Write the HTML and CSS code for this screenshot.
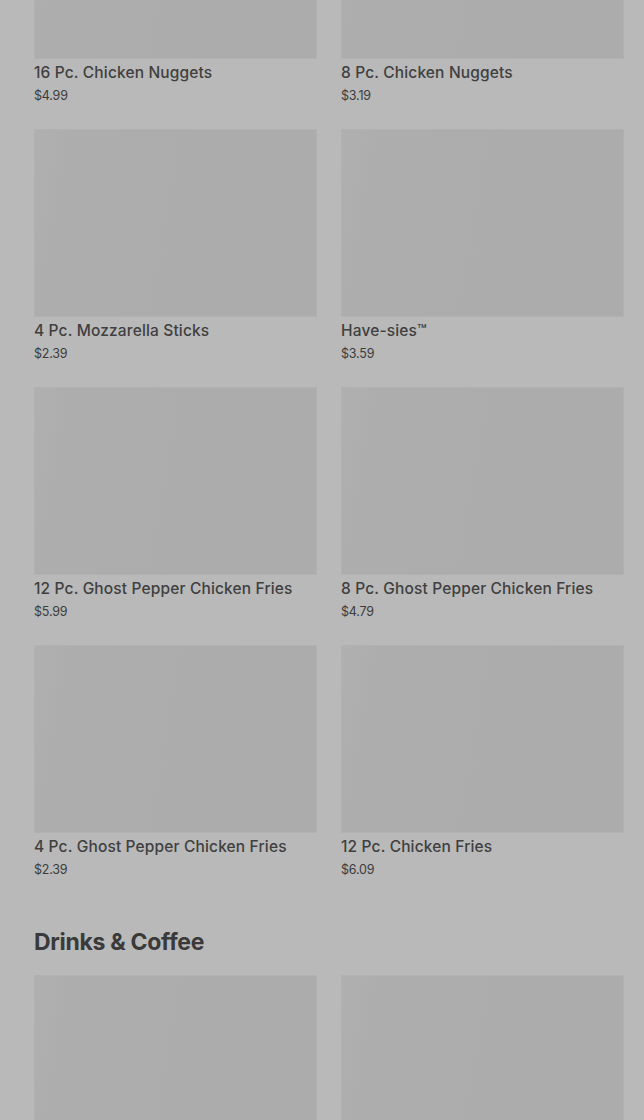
FILE: index.html
```html
<!DOCTYPE html>
<html lang="en">
<head>
  <meta charset="UTF-8" />
  <meta name="viewport" content="width=device-width, initial-scale=1.0"/>
  <title>Menu</title>
  <link rel="stylesheet" href="styles.css">
</head>
<body>
  <div class="menu">
    <section class="category">
      <div class="grid">
        <div class="item">
          <div class="thumb"></div>
          <div class="name">16 Pc. Chicken Nuggets</div>
          <div class="price">$4.99</div>
        </div>
        <div class="item">
          <div class="thumb"></div>
          <div class="name">8 Pc. Chicken Nuggets</div>
          <div class="price">$3.19</div>
        </div>
        <div class="item">
          <div class="thumb"></div>
          <div class="name">4 Pc. Mozzarella Sticks</div>
          <div class="price">$2.39</div>
        </div>
        <div class="item">
          <div class="thumb"></div>
          <div class="name">Have-sies™</div>
          <div class="price">$3.59</div>
        </div>
        <div class="item">
          <div class="thumb"></div>
          <div class="name">12 Pc. Ghost Pepper Chicken Fries</div>
          <div class="price">$5.99</div>
        </div>
        <div class="item">
          <div class="thumb"></div>
          <div class="name">8 Pc. Ghost Pepper Chicken Fries</div>
          <div class="price">$4.79</div>
        </div>
        <div class="item">
          <div class="thumb"></div>
          <div class="name">4 Pc. Ghost Pepper Chicken Fries</div>
          <div class="price">$2.39</div>
        </div>
        <div class="item">
          <div class="thumb"></div>
          <div class="name">12 Pc. Chicken Fries</div>
          <div class="price">$6.09</div>
        </div>
      </div>
    </section>

    <section class="category">
      <h2>Drinks &amp; Coffee</h2>
      <div class="grid">
        <div class="item">
          <div class="thumb"></div>
        </div>
        <div class="item">
          <div class="thumb"></div>
        </div>
      </div>
    </section>
  </div>
</body>
</html>
```

FILE: styles.css
```css
body {
  margin: 0;
  background: #b9b9b9;
  font-family: Inter, "Noto Sans", sans-serif;
  color: #3c3c3c;
  overflow: hidden;
}

.menu {
  margin-top: -129px;
  padding: 0 20px 0 34px;
}

.category h2 {
  margin: 47px 0 18px;
  font-size: 23px;
  line-height: 30px;
  font-weight: 700;
  letter-spacing: -0.3px;
  color: #3a3a3a;
}

.grid {
  display: grid;
  grid-template-columns: 1fr 1fr;
  column-gap: 24px;
  row-gap: 23px;
}

.thumb {
  height: 188px;
  box-sizing: border-box;
  border: 1px solid #b1b1b1;
  background: linear-gradient(100deg, #b0b0b0 0%, #adadad 12%, #acacac 100%);
}

.name {
  margin-top: 2px;
  font-size: 15.5px;
  line-height: 24px;
  font-weight: 500;
  letter-spacing: 0.15px;
  color: #404040;
}

.price {
  margin-top: 1px;
  font-size: 12.5px;
  line-height: 20px;
  letter-spacing: -0.2px;
}
```
